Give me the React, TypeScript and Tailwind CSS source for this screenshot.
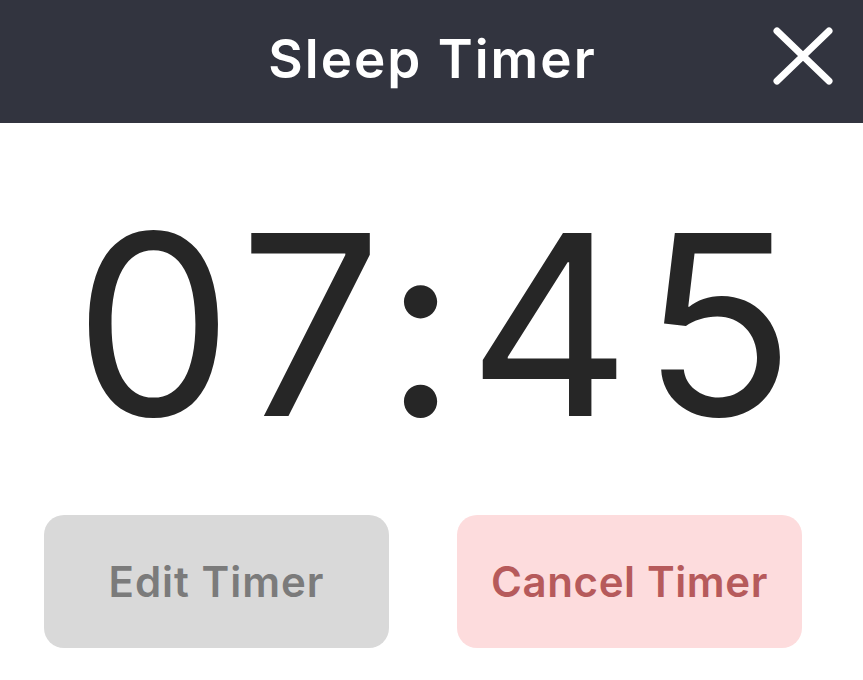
export default function App() {
  return (
    <div className="w-[863px] h-[680px] bg-white flex flex-col" style={{ fontFamily: "Inter, 'Noto Sans', sans-serif" }}>
      <header className="relative h-[123px] bg-[#32343f] flex items-center justify-center">
        <h1 className="text-[53px] font-semibold text-white leading-none tracking-[2px] -mt-[4px] pl-[2px]">Sleep Timer</h1>
        <button className="absolute right-[29px] top-[27px] w-[62px] h-[58px] flex items-center justify-center" aria-label="Close">
          <svg width="62" height="58" viewBox="0 0 62 58" fill="none">
            <path d="M5 4 L57 54 M57 4 L5 54" stroke="white" strokeWidth="7" strokeLinecap="round" />
          </svg>
        </button>
      </header>
      <div className="h-[392px] flex items-start justify-center pt-[76px]">
        <span className="text-[252px] font-normal text-[#262626] leading-none tracking-[11px] pl-[17px]">07:45</span>
      </div>
      <div className="flex gap-[68px] pl-[44px]">
        <button className="w-[345px] h-[133px] rounded-[20px] bg-[#d9d9d9] text-[#7b7b7b] text-[42px] font-semibold leading-none tracking-[1px]">
          Edit Timer
        </button>
        <button className="w-[345px] h-[133px] rounded-[20px] bg-[#fddcdd] text-[#b65a5b] text-[42px] font-semibold leading-none tracking-[0.6px]">
          Cancel Timer
        </button>
      </div>
    </div>
  );
}
